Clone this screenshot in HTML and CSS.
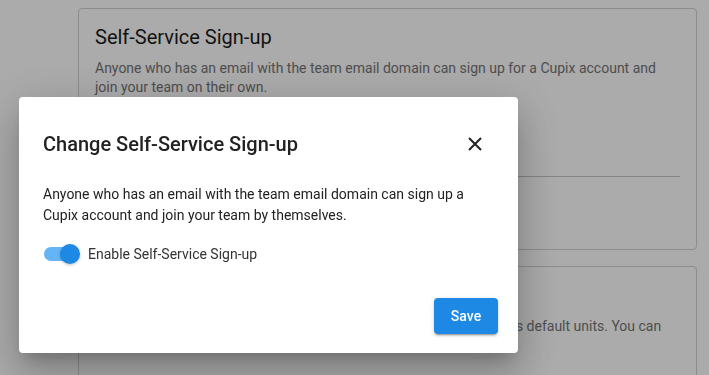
FILE: index.html
```html
<!DOCTYPE html>
<html lang="en">
<head>
  <meta charset="UTF-8" />
  <title>Team settings</title>
  <meta name="viewport" content="width=device-width, initial-scale=1.0" />
  <link rel="stylesheet" href="styles.css">
</head>
<body>
  <div class="page">
    <div class="card">
      <h2>Self-Service Sign-up</h2>
      <p>Anyone who has an email with the team email domain can sign up for a Cupix account and join your team on their own.</p>
      <div class="card-row"></div>
      <div class="card-divider"></div>
    </div>
    <div class="card card-units">
      <h2>Units</h2>
      <p>Units chosen here apply to all the projects in this team as your team's default units. You can<br>change them in your personal settings.</p>
    </div>
  </div>

  <div class="backdrop"></div>

  <div class="dialog">
    <div class="dialog-head">
      <h1>Change Self-Service Sign-up</h1>
      <button class="close-btn" aria-label="close">
        <svg width="14" height="14" viewBox="0 0 14 14">
          <path d="M1 1 L13 13 M13 1 L1 13" stroke="#222" stroke-width="2" />
        </svg>
      </button>
    </div>
    <p class="dialog-text">Anyone who has an email with the team email domain can sign up a Cupix account and join your team by themselves.</p>
    <label class="switch-row">
      <span class="switch"><span class="switch-thumb"></span></span>
      <span>Enable Self-Service Sign-up</span>
    </label>
    <div class="dialog-actions">
      <button class="save-btn">Save</button>
    </div>
  </div>
</body>
</html>
```

FILE: styles.css
```css
body {
  margin: 0;
  font-family: Roboto, "Liberation Sans", sans-serif;
  background-color: #ffffff;
  overflow: hidden;
  height: 375px;
}

.page {
  padding: 8px 12px 0 78px;
  display: flex;
  flex-direction: column;
  gap: 16px;
}

.card {
  border: 1px solid #d2d2d2;
  border-radius: 4px;
  padding: 16px 16px 0 16px;
  box-sizing: border-box;
  height: 242px;
}

.card h2 {
  margin: 0;
  font-size: 20px;
  font-weight: 400;
  color: #1c1c1c;
  line-height: 24px;
}

.card p {
  margin: 10px 0 0;
  font-size: 14px;
  line-height: 19px;
  color: #757575;
  white-space: nowrap;
}

.card:first-child p {
  white-space: normal;
}

.card-row {
  height: 79px;
}

.card-divider {
  height: 1px;
  background-color: #c4c4c4;
}

.card-units {
  height: 140px;
}

.card-units h2 {
  visibility: hidden;
}

.card-units p {
  margin-top: 10px;
}

.backdrop {
  position: fixed;
  inset: 0;
  background-color: rgba(0, 0, 0, 0.33);
}

.dialog {
  position: fixed;
  left: 19px;
  top: 97px;
  width: 499px;
  height: 256px;
  box-sizing: border-box;
  background-color: #ffffff;
  border-radius: 4px;
  padding: 29px 25px 0 24px;
  box-shadow: 0 11px 15px -7px rgba(0, 0, 0, 0.2), 0 24px 38px 3px rgba(0, 0, 0, 0.14), 0 9px 46px 8px rgba(0, 0, 0, 0.12);
  display: flex;
  flex-direction: column;
}

.dialog-head {
  display: flex;
  align-items: center;
  justify-content: space-between;
}

.dialog-head h1 {
  margin: 0;
  font-size: 20px;
  font-weight: 500;
  color: #222222;
  line-height: 30px;
}

.close-btn {
  border: none;
  background: none;
  padding: 0;
  width: 36px;
  height: 36px;
  display: flex;
  align-items: center;
  justify-content: center;
  cursor: pointer;
}

.dialog-text {
  margin: 22px 0 0;
  font-size: 14px;
  line-height: 21px;
  color: #222222;
}

.switch-row {
  display: flex;
  align-items: center;
  gap: 8px;
  margin-top: 20px;
  font-size: 14px;
  color: #333333;
}

.switch {
  position: relative;
  width: 34px;
  height: 14px;
  border-radius: 7px;
  background-color: #64b5f6;
  margin-left: 1px;
  margin-right: 2px;
}

.switch-thumb {
  position: absolute;
  right: -2px;
  top: -3px;
  width: 20px;
  height: 20px;
  border-radius: 50%;
  background-color: #1e88e5;
  box-shadow: 0 1px 3px rgba(0, 0, 0, 0.25);
}

.dialog-actions {
  margin-top: auto;
  margin-bottom: 19px;
  margin-right: -5px;
  display: flex;
  justify-content: flex-end;
}

.save-btn {
  width: 64px;
  height: 36px;
  border: none;
  border-radius: 4px;
  background-color: #1e88e5;
  color: #ffffff;
  font-family: Roboto, "Liberation Sans", sans-serif;
  font-size: 14px;
  font-weight: 500;
  box-shadow: 0 3px 1px -2px rgba(0, 0, 0, 0.2), 0 2px 2px 0 rgba(0, 0, 0, 0.14), 0 1px 5px 0 rgba(0, 0, 0, 0.12);
  cursor: pointer;
}
```
